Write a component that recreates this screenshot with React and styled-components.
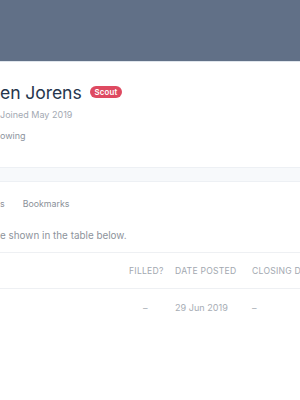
import React from 'react';
import styled, {createGlobalStyle} from 'styled-components';

const Global=createGlobalStyle`
    html, body { margin: 0; padding: 0; background: #fff; }
    body { font-family: Inter, "Noto Sans", sans-serif; overflow: hidden; }
`
const Cover=styled.div`
    height: 61px;
    background: #617087;
    border-bottom: 1px solid #dfe5ec;
`
const Profile=styled.div`
    padding: 19px 0 0 0;
    height: 105px;
    box-sizing: border-box;
`
const NameRow=styled.div`
    display: flex;
    align-items: center;
    gap: 8px;
    height: 22px;
`
const Name=styled.h1`
    margin: 0;
    font-size: 17.6px;
    font-weight: 400;
    color: #26364d;
    letter-spacing: -0.1px;
`
const Badge=styled.span`
    display: inline-flex;
    align-items: center;
    height: 12px;
    padding: 0 5px;
    border-radius: 6px;
    background: #de4a61;
    color: #fff;
    font-size: 7.8px;
    font-weight: 600;
    letter-spacing: 0.2px;
`
const Meta=styled.div`
    margin-top: ${p=>p.top}px;
    font-size: 9px;
    color: ${p=>p.dark ? '#8d949e' : '#a3a9b2'};
    line-height: 14px;
`
const Band=styled.div`
    height: 13px;
    background: #f7f9fb;
    border-top: 1px solid #edf0f4;
    border-bottom: 1px solid #edf0f4;
`
const Tabs=styled.nav`
    display: flex;
    gap: 18px;
    height: 40px;
    align-items: center;
    padding-top: 2px;
    box-sizing: border-box;
`
const Tab=styled.span`
    font-size: 8.8px;
    color: #8b9199;
`
const Intro=styled.p`
    margin: 0;
    font-size: 9.9px;
    color: #8d939b;
    height: 30px;
    line-height: 26px;
`
const Table=styled.div`
    border-top: 1px solid #eef0f3;
`
const Row=styled.div`
    display: grid;
    grid-template-columns: 129px 46px 77px 1fr;
    align-items: center;
    height: ${p=>p.head ? 35 : 36}px;
    border-bottom: ${p=>p.head ? '1px solid #eef0f3' : 'none'};
`
const Cell=styled.span`
    font-size: ${p=>p.head ? 8.6 : 9.1}px;
    text-transform: ${p=>p.head ? 'uppercase' : 'none'};
    letter-spacing: ${p=>p.head ? '0.25px' : '0'};
    color: ${p=>p.head ? '#a2a8b0' : '#a7adb5'};
    white-space: nowrap;
    padding-left: ${p=>p.pad || 0}px;
`

const App=()=>{
    return(
        <>
            <Global/>
            <Cover/>
            <Profile>
                <NameRow>
                    <Name>en Jorens</Name>
                    <Badge>Scout</Badge>
                </NameRow>
                <Meta top={5}>Joined May 2019</Meta>
                <Meta top={7} dark>owing</Meta>
            </Profile>
            <Band/>
            <Tabs>
                <Tab>s</Tab>
                <Tab>Bookmarks</Tab>
            </Tabs>
            <Intro>e shown in the table below.</Intro>
            <Table>
                <Row head>
                    <span/>
                    <Cell head>Filled?</Cell>
                    <Cell head>Date posted</Cell>
                    <Cell head>Closing date</Cell>
                </Row>
                <Row>
                    <span/>
                    <Cell pad={14}>–</Cell>
                    <Cell>29 Jun 2019</Cell>
                    <Cell>–</Cell>
                </Row>
            </Table>
        </>
    )
}

export default App;
